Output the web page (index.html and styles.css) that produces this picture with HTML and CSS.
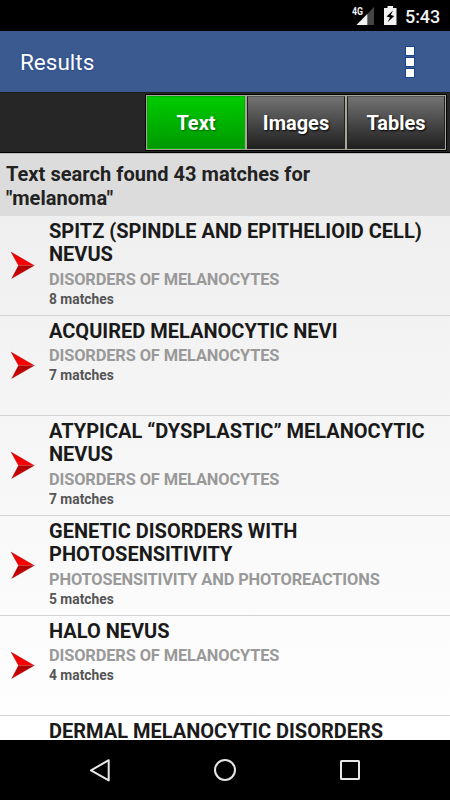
FILE: index.html
```
<!DOCTYPE html>
<html lang="en">
<head>
<meta charset="utf-8">
<title>Results</title>
<link rel="stylesheet" href="styles.css">
</head>
<body>
<svg class="defs" width="0" height="0" aria-hidden="true">
  <defs>
    <linearGradient id="red-top" x1="0" y1="0" x2="0" y2="1"><stop offset="0" stop-color="#e60000"/><stop offset="1" stop-color="#ff0000"/></linearGradient>
    <linearGradient id="red-bottom" x1="0" y1="0" x2="0" y2="1"><stop offset="0" stop-color="#a80000"/><stop offset="1" stop-color="#dd0000"/></linearGradient>
    <symbol id="arrow" viewBox="0 0 28 30">
      <path d="M2 2 25.300 15.500H9.500Z" fill="url(#red-top)"/>
      <path d="M9.500 15.500H25.300L2.700 28.500Z" fill="url(#red-bottom)"/>
      <path d="M2 2 25.300 15.500 2.700 28.500 9.500 15.500Z" fill="none" stroke="#8b1010" stroke-opacity=".55" stroke-width=".6"/>
    </symbol>
  </defs>
</svg>
<div class="screen">
  <div class="status">
    <svg class="signal" width="24" height="22" viewBox="0 0 24 22">
      <path d="M22 1V19H4.500Z" fill="#444"/><path d="M15.300 7.900V19H4.500Z" fill="#f2f2f2"/>
      <path d="M0 0H11V9.500H0Z" fill="#000"/>
      <text x="0" y="9" class="net" textLength="11" lengthAdjust="spacingAndGlyphs">4G</text>
    </svg>
    <svg class="battery" width="13" height="20" viewBox="0 0 13 20">
      <path d="M3.500 0H9V2H12.500V19H0V2H3.500Z" fill="#f2f2f2"/>
      <path d="M9 4.500 2.500 10.500 6 11.500 3.500 16.300 10.300 10 6.800 9Z" fill="#000"/>
    </svg>
    <span class="time">5:43</span>
  </div>
  <header class="bar">
    <h1>Results</h1>
    <div class="more"><i></i><i></i><i></i></div>
  </header>
  <nav class="tabs">
    <div class="group">
      <span class="tab active">Text</span>
      <span class="tab">Images</span>
      <span class="tab">Tables</span>
    </div>
  </nav>
  <div class="summary">Text search found 43 matches for<br>"melanoma"</div>
  <ul class="list">
    <li><svg class="arrow"><use href="#arrow"/></svg><div><h2>SPITZ (SPINDLE AND EPITHELIOID CELL)<br>NEVUS</h2><p class="cat">DISORDERS OF MELANOCYTES</p><p class="count">8 matches</p></div></li>
    <li><svg class="arrow"><use href="#arrow"/></svg><div><h2>ACQUIRED MELANOCYTIC NEVI</h2><p class="cat">DISORDERS OF MELANOCYTES</p><p class="count">7 matches</p></div></li>
    <li><svg class="arrow"><use href="#arrow"/></svg><div><h2>ATYPICAL “DYSPLASTIC” MELANOCYTIC<br>NEVUS</h2><p class="cat">DISORDERS OF MELANOCYTES</p><p class="count">7 matches</p></div></li>
    <li><svg class="arrow"><use href="#arrow"/></svg><div><h2>GENETIC DISORDERS WITH<br>PHOTOSENSITIVITY</h2><p class="cat">PHOTOSENSITIVITY AND PHOTOREACTIONS</p><p class="count">5 matches</p></div></li>
    <li><svg class="arrow"><use href="#arrow"/></svg><div><h2>HALO NEVUS</h2><p class="cat">DISORDERS OF MELANOCYTES</p><p class="count">4 matches</p></div></li>
    <li class="last"><h2>DERMAL MELANOCYTIC DISORDERS</h2></li>
  </ul>
  <footer class="nav">
    <svg width="24" height="26" viewBox="0 0 24 26"><path d="M20.700 3.200V23.400L3 13.300Z"/></svg>
    <svg width="24" height="26" viewBox="0 0 24 26"><circle cx="12" cy="13" r="10"/></svg>
    <svg width="24" height="26" viewBox="0 0 24 26"><rect x="3" y="4" width="18" height="18" rx=".5"/></svg>
  </footer>
</div>
</body>
</html>
```
FILE: styles.css
```
* { box-sizing: border-box; margin: 0; padding: 0; }
body { font-family: Roboto, "Liberation Sans", sans-serif; background: #000; }
.defs { position: absolute; }
.screen { width: 450px; height: 800px; display: flex; flex-direction: column; overflow: hidden; }
.status { height: 31px; flex: none; background: #000; display: flex; align-items: flex-start; justify-content: flex-end; padding: 6px 10px 0 0; }
.signal { margin: 0 8px 0 0; }
.net { font-size: 10px; font-weight: 700; fill: #f2f2f2; }
.battery { margin-right: 8px; }
.time { width: 35px; text-align: right; color: #f2f2f2; font-size: 18px; line-height: 21px; font-weight: 500; letter-spacing: -.1px; }
.bar { height: 61px; flex: none; background: #3b5a90; display: flex; align-items: center; justify-content: space-between; padding: 0 36px 0 20px; }
h1 { color: #fff; font-size: 22.5px; font-weight: 400; line-height: 27px; padding-top: 2px; text-shadow: 0 0 2px #1d3f80; }
.more { display: flex; flex-direction: column; gap: 3px; }
.more i { width: 8px; height: 8px; background: #fff; outline: 1px solid #17468c; }
.tabs { height: 61px; flex: none; background: #262626; border-top: 1px solid #1c1c1c; border-bottom: 1px solid #000; display: flex; justify-content: flex-end; padding: 2px 4px 0 0; }
.group { width: 300px; height: 55px; display: flex; gap: 2px; padding: 1px; background: #aaa798; outline: 1px solid #000; }
.tab { flex: 1; display: flex; align-items: center; justify-content: center; color: #fff; font-size: 20px; font-weight: 700; text-shadow: 1px 1px 2px #000; background: linear-gradient(#727272, #202020); border: 1px solid #222; border-top-color: #555; }
.tab.active { background: linear-gradient(#00cc00, #009900); border-color: #00b000; text-shadow: 1px 1px 2px #006000; }
.summary { height: 63px; flex: none; padding: 9px 6px 0; background: #dcdcdc; border-top: 1px solid #bbb; color: #222; font-size: 20px; line-height: 23.5px; font-weight: 700; letter-spacing: .04px; }
.list { flex: 1; min-height: 0; overflow: hidden; list-style: none; background: linear-gradient(#efefef, #fff); }
li { height: 100px; border-bottom: 1px solid #d3d3d3; display: flex; padding: 4px 0 0 9px; }
.last { height: auto; border: 0; padding: 4px 0 0 49px; }
.last h2 { line-height: 20px; padding-top: 1px; }
.arrow { width: 28px; height: 30px; flex: none; margin: 30px 12px 0 0; }
h2 { color: #1a1a1a; font-size: 20px; line-height: 23px; font-weight: 700; }
.cat { color: #999; font-size: 16.4px; line-height: 20px; font-weight: 700; letter-spacing: -.12px; margin-top: 4px; }
.count { color: #555; font-size: 13.8px; line-height: 17px; font-weight: 700; margin-top: 1px; }
li h2 + .cat { margin-top: 3px; }
li h2:has(br) + .cat { margin-top: 4px; }
.nav { height: 60px; flex: none; background: #000; display: flex; justify-content: center; align-items: center; gap: 101px; }
.nav svg { fill: none; stroke: #e6e6e6; stroke-width: 2; stroke-linejoin: round; }
```
